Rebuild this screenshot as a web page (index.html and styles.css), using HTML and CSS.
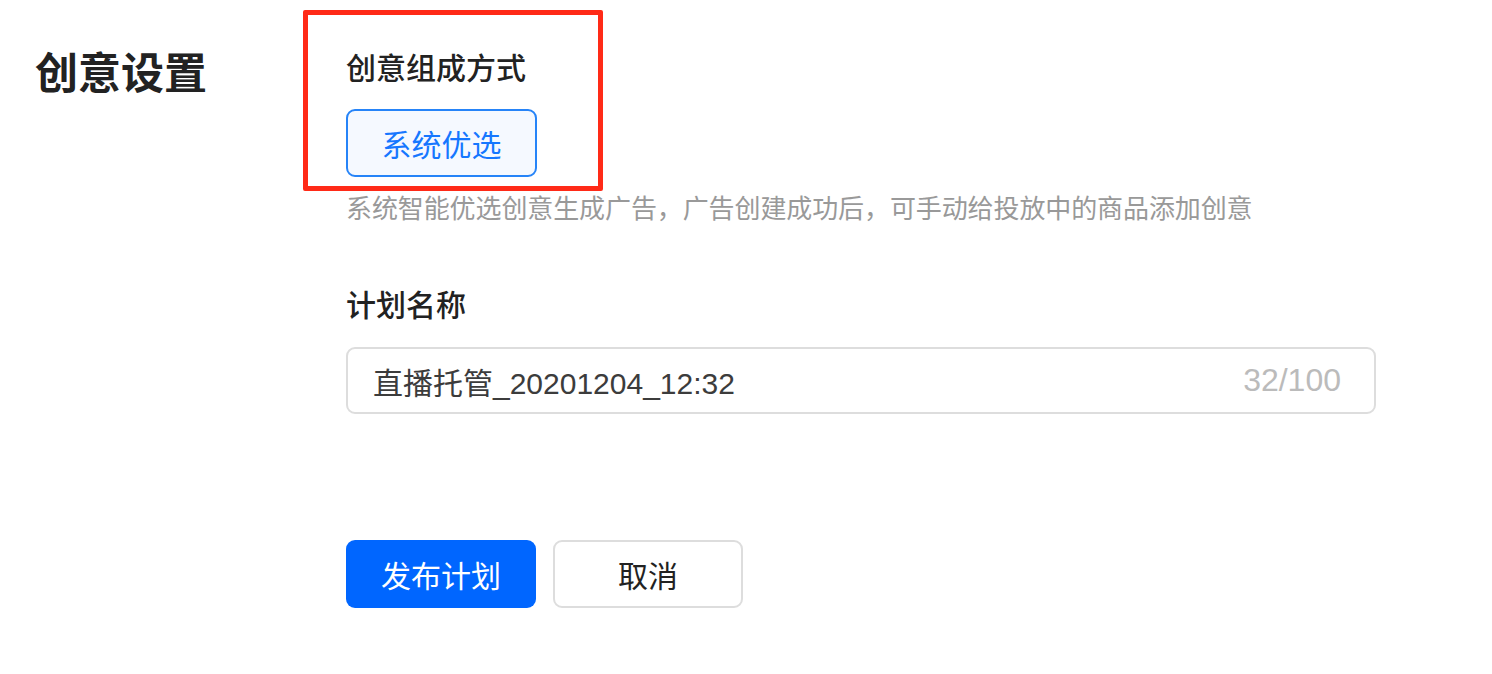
FILE: index.html
```html
<!DOCTYPE html>
<html lang="zh-CN">
<head>
<meta charset="utf-8">
<title>创意设置</title>
<link rel="stylesheet" href="styles.css">
</head>
<body>
<div class="page">
  <div class="side">
    <h1 class="side-title">创意设置</h1>
  </div>
  <div class="main">
    <div class="highlight">
      <div class="field-label">创意组成方式</div>
      <button class="option-btn" type="button">系统优选</button>
    </div>
    <div class="content">
      <p class="hint">系统智能优选创意生成广告，广告创建成功后，可手动给投放中的商品添加创意</p>
      <div class="field-label name-label">计划名称</div>
      <div class="input-box">
        <span class="input-text">直播托管_20201204_12:32</span>
        <span class="input-count">32/100</span>
      </div>
      <div class="actions">
        <button class="btn btn-primary" type="button">发布计划</button>
        <button class="btn btn-default" type="button">取消</button>
      </div>
    </div>
  </div>
</div>
</body>
</html>
```

FILE: styles.css
```css
* {
  box-sizing: border-box;
}

html, body {
  margin: 0;
  padding: 0;
  background: #ffffff;
}

body {
  font-family: "Liberation Sans", "Noto Sans CJK SC", sans-serif;
  color: #222222;
}

.page {
  display: flex;
  align-items: flex-start;
}

.side {
  width: 303px;
  flex: none;
  padding-left: 35px;
  padding-top: 45px;
}

.side-title {
  margin: 0;
  font-size: 43px;
  line-height: 58px;
  font-weight: 700;
  color: #222222;
}

.main {
  flex: none;
  margin-top: 10px;
  display: flex;
  flex-direction: column;
  align-items: flex-start;
}

.highlight {
  width: 300px;
  border: 5px solid #ff2a17;
  border-radius: 2px;
  padding: 34px 0 9px 38px;
  display: flex;
  flex-direction: column;
  align-items: flex-start;
  gap: 20px;
}

.field-label {
  font-size: 30px;
  line-height: 40px;
  font-weight: 500;
  color: #222222;
}

.option-btn {
  width: 191px;
  height: 68px;
  border: 2px solid #2684f8;
  border-radius: 9px;
  background: #f5f9ff;
  color: #1677ff;
  font-family: inherit;
  font-size: 30px;
  padding: 0;
}

.content {
  padding-left: 43px;
  display: flex;
  flex-direction: column;
  align-items: flex-start;
}

.hint {
  margin: 0;
  font-size: 26px;
  line-height: 36px;
  color: #999999;
  letter-spacing: -0.1px;
}

.name-label {
  margin-top: 59px;
}

.input-box {
  margin-top: 21px;
  width: 1030px;
  height: 67px;
  border: 2px solid #dddddd;
  border-radius: 9px;
  display: flex;
  align-items: center;
  justify-content: space-between;
  padding: 0 33px 0 25px;
}

.input-text {
  font-size: 30px;
  color: #3c3c3c;
}

.input-count {
  font-size: 32px;
  color: #bbbbbb;
}

.actions {
  margin-top: 126px;
  display: flex;
  gap: 17px;
}

.btn {
  width: 190px;
  height: 68px;
  border-radius: 9px;
  font-family: inherit;
  font-size: 30px;
  padding: 0;
}

.btn-primary {
  background: #0066ff;
  border: none;
  color: #ffffff;
}

.btn-default {
  background: #ffffff;
  border: 2px solid #dddddd;
  color: #222222;
}
```
